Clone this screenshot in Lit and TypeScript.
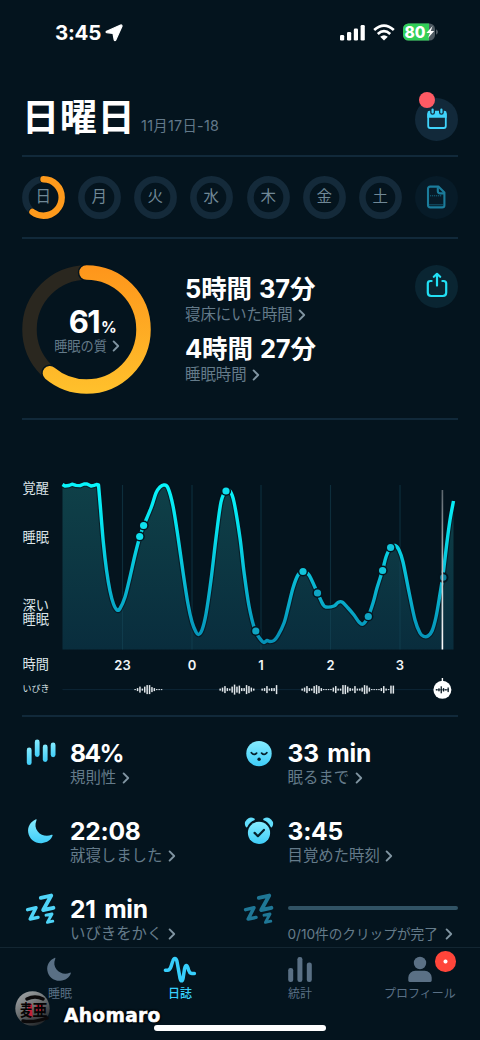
import { LitElement, html, svg, css } from 'lit';
import { customElement, property } from 'lit/decorators.js';
import { classMap } from 'lit/directives/class-map.js';

const chevron = html`<svg class="chevron" width="8" height="12" viewBox="0 0 8 12" fill="none" stroke="currentColor" stroke-width="1.9" stroke-linecap="round" stroke-linejoin="round"><path d="M1.6 1.4 6.2 6 1.6 10.6"/></svg>`;

const ICE = svg`<linearGradient id="ice" x1="0" y1="0" x2="0" y2="1"><stop offset="0" stop-color="#86ecff"/><stop offset="1" stop-color="#3fcdf8"/></linearGradient>`;

const MOON = 'M8.6 1.4C3.4 3.6 0.4 8.6 1.2 14.4 2.2 21 8 25.6 14.6 25.2 20 24.8 24.2 21.8 25.6 17.6 25.8 16.8 25.4 16.4 24.6 16.8 19.8 18.8 14 17.6 10.8 13.4 8.2 10 7.8 6.4 9.4 2.4 9.8 1.4 9.4 1 8.6 1.4Z';

const statIcons = {
  bars: svg`<svg width="30" height="28" viewBox="0 0 30 28">${ICE}
    <rect x="0.8" y="9.6" width="4.8" height="17.5" rx="2.4" fill="url(#ice)"/>
    <rect x="8.8" y="1.6" width="4.8" height="17.4" rx="2.4" fill="url(#ice)"/>
    <rect x="16.8" y="6.6" width="4.8" height="17.4" rx="2.4" fill="url(#ice)"/>
    <rect x="24.7" y="4.6" width="4.8" height="14.6" rx="2.4" fill="url(#ice)"/></svg>`,
  face: svg`<svg width="30" height="28" viewBox="0 0 30 28">${ICE}
    <circle cx="15" cy="15.6" r="12.7" fill="url(#ice)"/>
    <g fill="none" stroke="#06212d" stroke-width="1.8" stroke-linecap="round"><path d="M7.4 14.7q2.6 3.2 5.2 .4M17.6 15.1q2.6 2.8 5.2-.4"/></g>
    <circle cx="15.1" cy="21.2" r="1.7" fill="#06212d"/></svg>`,
  moon: svg`<svg width="30" height="28" viewBox="0 0 30 28">${ICE}<path transform="translate(1 2)" d="${MOON}" fill="url(#ice)"/></svg>`,
  alarm: svg`<svg width="30" height="28" viewBox="0 0 30 28">${ICE}
    <path d="M2.6 10.4A5.2 5.2 0 0 1 9.8 3.4Q5 5.4 2.6 10.4ZM27.4 10.4A5.2 5.2 0 0 0 20.2 3.4Q25 5.4 27.4 10.4Z" fill="url(#ice)" stroke="#62defc" stroke-width="1.9" stroke-linejoin="round"/>
    <circle cx="15" cy="16.4" r="12.2" fill="#04141e"/>
    <circle cx="15" cy="16.9" r="11.1" fill="url(#ice)"/>
    <path d="M10.6 16.9l3.3 3.3 6-6.3" fill="none" stroke="#06212d" stroke-width="2.2" stroke-linecap="round" stroke-linejoin="round"/></svg>`,
  zzz: svg`<svg width="30" height="32" viewBox="0 0 30 32" fill="none" stroke="currentColor" stroke-linecap="round" stroke-linejoin="round">
    <path stroke-width="3.9" d="M14.8 3.8 25.2 1.6 17.2 16 27.4 13.8"/>
    <path stroke-width="3.5" d="M1.6 15.6 10 13.8 4.2 25 12 23.4"/>
    <path stroke-width="2.9" d="M20 21.2 26 20 21.4 28.4 26.8 27.2"/></svg>`,
};

const tabIcons = {
  moon: svg`<svg width="28" height="27" viewBox="0 0 28 27"><path transform="translate(.2 .6) scale(.96)" d="${MOON}" fill="currentColor"/></svg>`,
  pulse: svg`<svg width="34" height="27" viewBox="0 0 34 27" fill="none" stroke="currentColor" stroke-width="3.5" stroke-linecap="round" stroke-linejoin="round"><path d="M2.4 14.2H4.6Q6.8 14.2 8 10.6L9.8 5C10.8 1.6 13 1.6 13.9 5L17.1 22.6C17.8 25.6 19.4 25.6 20 22.6L21.6 12.6C22.4 8.6 24 8.4 25 12 25.8 15.6 26.6 17.4 28.8 17.4H31.4"/></svg>`,
  bars: svg`<svg width="26" height="27" viewBox="0 0 26 27" fill="currentColor"><rect x="1.2" y="12" width="5" height="14" rx="2.3"/><rect x="10.4" y="1" width="5" height="25" rx="2.3"/><rect x="19.8" y="6.4" width="5" height="19.6" rx="2.3"/></svg>`,
  person: svg`<svg width="26" height="27" viewBox="0 0 26 27" fill="currentColor"><circle cx="13" cy="7" r="6.2"/><path d="M1.3 24.6V21.5A7 7 0 0 1 8.3 14.8H17.7A7 7 0 0 1 24.7 21.5V24.6Q24.7 26 23.3 26H2.7Q1.3 26 1.3 24.6Z"/></svg>`,
};

type Point = [number, number];

// x runs over the full width of the screen, y from the top of the chart section
const CURVE: Point[] = [
  [98.5, 65], [100.3, 86], [103.3, 122], [106.5, 150], [110, 171], [113.5, 184], [117, 190], [120, 188.5], [125, 177],
  [130, 157], [135, 135], [140, 116], [143.5, 106], [151, 88], [156, 73], [160, 67], [164, 65], [168, 68], [173, 86],
  [178, 117], [183, 152], [188, 184], [192, 202], [196, 212], [198.5, 214.5], [202, 210], [206, 194],
  [211, 160], [216, 118], [221, 82], [226, 71], [230, 71], [234, 82], [240, 118], [244, 152], [249, 186],
  [255, 210], [261, 220], [264, 222.5], [267, 220.5], [270, 221.5], [274, 220.5], [278, 215.5], [284, 203],
  [288, 188], [293, 168], [298, 155], [303, 151.5], [309, 155], [317.5, 173], [323, 184.5], [326, 187],
  [334, 186], [338, 182.5], [342, 182], [348, 188], [354, 195], [359, 202], [363, 204], [368, 197],
  [373, 183], [377, 168], [382.5, 150.5], [386, 137], [390.5, 127.5], [395, 125.5], [399, 130], [403, 142],
  [409, 172], [415, 200], [420, 213], [424, 216.5], [428, 216], [432, 211], [436, 197], [440, 174],
  [443, 155], [447, 122], [450, 100], [453.5, 81],
];

const DOTS: Point[] = [
  [139.7, 116.5], [143.6, 105.5], [226, 71], [255.8, 211], [303, 151.5], [317.5, 173],
  [368.3, 196.5], [382.6, 150.5], [390.6, 127.5],
];

const HOURS = [
  { x: 122.5, label: '23' },
  { x: 192, label: '0' },
  { x: 261, label: '1' },
  { x: 330.5, label: '2' },
  { x: 400, label: '3' },
];

// bar heights of the snoring track, one every 2.4px
const SNORES = [
  { x: 135, bars: [1, 3, 6, 2, 6, 9, 9, 5, 3, 1, 1, 1] },
  { x: 220, bars: [2, 4, 7, 3, 2, 6, 10, 6, 8, 3, 3, 9, 7, 4, 2] },
  { x: 262, bars: [2, 3, 7, 2, 3, 3, 9] },
  { x: 302, bars: [2, 4, 7, 3, 2, 7, 9, 7, 3, 1, 1, 1, 1, 4, 7, 2, 2, 9, 9, 6, 3, 2, 7, 2, 2, 4, 9, 8, 4, 1, 1, 1, 1, 3, 7, 2, 1, 8, 8] },
];

function smooth(points: Point[]) {
  let d = '';
  for (let i = 0; i < points.length - 1; i++) {
    const p0 = points[i - 1] || points[i];
    const p1 = points[i];
    const p2 = points[i + 1];
    const p3 = points[i + 2] || p2;
    d += `C${p1[0] + (p2[0] - p0[0]) / 6} ${p1[1] + (p2[1] - p0[1]) / 6} ${p2[0] - (p3[0] - p1[0]) / 6} ${p2[1] - (p3[1] - p1[1]) / 6} ${p2[0]} ${p2[1]}`;
  }
  return d;
}

function dotColor(y: number) {
  if (y < 120) return '#0fe0ee';
  return y < 160 ? '#12c4da' : '#0fa5c4';
}

@customElement('day-ring')
class DayRing extends LitElement {
  @property() label = '';
  @property({ type: Number }) score = 0;

  static styles = css`
    :host { display: block; width: 43px; height: 43px; }
    svg { display: block; }
    text { font: 400 15.5px "Noto Sans CJK JP", sans-serif; fill: #708896; }
  `;

  render() {
    const len = 2 * Math.PI * 18.2;
    return html`
      <svg width="43" height="43" viewBox="0 0 43 43" fill="none">
        <circle cx="21.5" cy="21.5" r="18.1" stroke="#142a3a" stroke-width="6.6"/>
        ${this.score ? svg`
          <g transform="rotate(-90 21.5 21.5)" stroke-linecap="round">
            <circle cx="21.5" cy="21.5" r="18.2" stroke="#04141e" stroke-width="8" stroke-dasharray="${len * this.score} ${len}"/>
            <circle cx="21.5" cy="21.5" r="18.2" stroke="#fe9a1c" stroke-width="6.4" stroke-dasharray="${len * this.score} ${len}"/>
          </g>` : ''}
        <text x="21.3" y="26.3" text-anchor="middle">${this.label}</text>
      </svg>
    `;
  }
}

@customElement('sleep-chart')
class SleepChart extends LitElement {
  static styles = css`
    :host { display: block; }
    svg { display: block; }
    .axis { font: 400 13.2px "Noto Sans CJK JP", sans-serif; fill: #dde5e9; }
    .small { font-size: 9px; }
    .hour { font: 600 13px Inter, sans-serif; fill: #f1f5f7; }
  `;

  render() {
    const head = 'M62.5 64.5L65 66 69 65.5 72 64.2 76 65.4 80 65.6 84 64 87 64 91 66 94 65.4 96.5 64.5 98.5 65';
    const line = head + smooth(CURVE);
    return html`
      <svg width="480" height="296" viewBox="0 0 480 296">
        <defs>
          <linearGradient id="line" gradientUnits="userSpaceOnUse" x1="0" y1="65" x2="0" y2="225">
            <stop offset="0" stop-color="#08f5fb"/><stop offset=".25" stop-color="#05e2ee"/>
            <stop offset=".6" stop-color="#08b9d3"/><stop offset="1" stop-color="#058fb5"/>
          </linearGradient>
          <linearGradient id="area" gradientUnits="userSpaceOnUse" x1="0" y1="65" x2="0" y2="229">
            <stop offset="0" stop-color="#0f4048"/><stop offset="1" stop-color="#092d3d"/>
          </linearGradient>
          <linearGradient id="cursor" gradientUnits="userSpaceOnUse" x1="0" y1="70" x2="0" y2="229">
            <stop offset="0" stop-color="#5c666d"/><stop offset=".5" stop-color="#b9bec1"/><stop offset="1" stop-color="#fff"/>
          </linearGradient>
        </defs>
        <path d="${line}V229.5H62.5Z" fill="url(#area)"/>
        ${HOURS.map(h => svg`<path d="M${h.x} 65V229.5" stroke="#15475a" stroke-opacity=".5" stroke-width="1.2"/>`)}
        <path d="${line}" fill="none" stroke="#05131d" stroke-width="5.6" stroke-linejoin="round" stroke-opacity=".7"/>
        <path d="${line}" fill="none" stroke="url(#line)" stroke-width="3.4" stroke-linejoin="round"/>
        <circle cx="443.3" cy="157.5" r="4.2" fill="#087f9c" stroke="#04141e" stroke-width="2"/>
        ${DOTS.map(([x, y]) => svg`
          <circle cx="${x}" cy="${y}" r="5.1" fill="#04141e"/>
          <circle cx="${x}" cy="${y}" r="3.6" fill="${dotColor(y)}"/>`)}
        <path d="M442.4 70V229.5" stroke="url(#cursor)" stroke-width="1.6"/>

        <text class="axis" x="22.5" y="73">覚醒</text>
        <text class="axis" x="22.5" y="122">睡眠</text>
        <text class="axis" x="22.5" y="190">深い</text>
        <text class="axis" x="22.5" y="203.5">睡眠</text>
        <text class="axis" x="22.5" y="249">時間</text>
        <text class="axis small" x="22.5" y="272">いびき</text>
        ${HOURS.map(h => svg`<text class="hour" x="${h.x}" y="249.7" text-anchor="middle">${h.label}</text>`)}

        <path d="M62.5 269.6H433" stroke="#0d2637" stroke-width="1"/>
        ${SNORES.map(s => s.bars.map((b, i) => svg`<rect x="${s.x + i * 2.4 - 0.6}" y="${269.6 - b / 2}" width="1.5" height="${b}" fill="#e2e7ea"/>`))}
        <path d="M442.4 258V262" stroke="#fff" stroke-width="1.4"/>
        <circle cx="442.4" cy="269.8" r="9" fill="#fff"/>
        ${[1.2, 3, 7, 3.4, 1.4, 4.6].map((b, i) => svg`<rect x="${436 + i * 2.3}" y="${269.8 - b / 2}" width="1.3" height="${b}" fill="#0a1a24"/>`)}
        <path d="M435.6 269.8H449" stroke="#0a1a24" stroke-width=".7"/>
      </svg>
    `;
  }
}

@customElement('app-root')
class AppRoot extends LitElement {
  static styles = css`
    :host {
      display: flex;
      flex-direction: column;
      position: relative;
      width: 480px;
      height: 1040px;
      overflow: hidden;
      background: #04141e;
      color: #fff;
      font-family: Inter, "Noto Sans CJK JP", sans-serif;
    }
    svg { display: block; flex: none; overflow: visible; }
    section, header { box-sizing: border-box; margin: 0 22px; border-bottom: 2px solid #11293a; }
    .status {
      display: flex;
      align-items: center;
      height: 66px;
      flex: none;
      padding: 0 42px 0 55px;
    }
    .clock { font-size: 20.5px; font-weight: 700; letter-spacing: -0.25px; margin: -1px 4px 0 0; }
    .spacer { flex: 1; }
    .signals { display: flex; align-items: center; gap: 8px; margin-top: -2px; }
    .battery { font: 800 15.5px Inter, sans-serif; fill: #fff; }

    header { display: flex; height: 91px; flex: none; }
    .title { margin-top: 21px; font-size: 37.2px; line-height: 62px; font-weight: 700; letter-spacing: 0.5px; }
    .date { margin: 50px 0 0 6px; font-size: 14.3px; line-height: 20px; letter-spacing: 0.3px; color: #63798a; }
    .round {
      position: relative;
      display: flex;
      align-items: center;
      justify-content: center;
      width: 43px;
      height: 43px;
      border-radius: 50%;
      flex: none;
    }
    .calendar { margin-top: 32px; background: #12293a; }
    .calendar svg { margin-top: -2px; }
    .badge { position: absolute; left: 4px; top: -6px; width: 16px; height: 16px; border-radius: 50%; background: #fe5a64; }
    .note { background: #071b28; }
    .share { margin-top: 26px; background: #0a2532; }
    .share svg { margin-top: -3px; }

    .days { display: flex; align-items: center; justify-content: space-between; height: 82px; flex: none; }

    .score { display: flex; height: 181px; flex: none; }
    .gauge { position: relative; width: 129px; height: 129px; margin-top: 26px; }
    .gauge-text { position: absolute; inset: 0; display: flex; flex-direction: column; align-items: center; padding-top: 41px; }
    .percent { font-size: 31px; font-weight: 700; line-height: 32px; height: 32.5px; letter-spacing: -1.6px; margin-left: 12px; }
    .percent small { font-size: 15.5px; line-height: 1; letter-spacing: -0.5px; margin-left: 2px; }
    .link { display: flex; align-items: center; gap: 5.5px; font-size: 15.4px; line-height: 22px; color: #647b8a; white-space: nowrap; }
    .link .chevron { color: #8095a2; }
    .gauge .link { font-size: 13.2px; gap: 5px; line-height: 14px; margin-left: 1px; }
    .durations { margin: 33px 0 0 34px; }
    .duration { font-size: 25.5px; line-height: 34px; height: 32px; font-weight: 700; letter-spacing: -0.15px; word-spacing: 1.2px; white-space: nowrap; }
    .durations .link { height: 22px; line-height: 20px; margin-bottom: 6px; padding-bottom: 1px; box-sizing: border-box; }

    .chart { height: 297px; flex: none; }
    .chart sleep-chart { margin-left: -22px; }

    .stats {
      display: grid;
      grid-template-columns: 217.5px 218.5px;
      grid-auto-rows: 78px;
      flex: none;
      height: 230px;
      margin: 0 22px;
      padding-top: 19px;
      box-sizing: border-box;
      overflow: hidden;
    }
    .stat { display: flex; gap: 14px; padding-left: 4px; }
    .stat-icon { width: 30px; height: 32px; padding-top: 2px; color: #4fd4f8; }
    .stat.pending .stat-icon { color: #1f7796; }
    .value { font-size: 24.6px; line-height: 34px; font-weight: 700; letter-spacing: -0.25px; word-spacing: 3px; }
    .percentage { letter-spacing: -1.6px; }
    .stat .link { line-height: 20px; margin-top: -2px; }
    .pending .link { font-size: 13.7px; margin-top: 14px; gap: 7px; letter-spacing: -0.05px; }
    .progress { width: 170px; height: 4.5px; margin-top: 13.5px; border-radius: 2.5px; background: #315365; }

    nav { display: grid; grid-template-columns: repeat(4, 1fr); height: 93px; flex: none; border-top: 1px solid #132632; box-sizing: border-box; }
    .tab { position: relative; display: flex; flex-direction: column; align-items: center; padding-top: 8px; color: #5a7085; font-size: 12px; line-height: 18px; }
    .tab span { margin-top: 2px; }
    .tab.active { color: #37cffc; font-weight: 500; }
    .alert { position: absolute; left: 75px; top: 3px; width: 20.5px; height: 20.5px; border-radius: 50%; background: radial-gradient(circle, #fff 1.6px, #ff453a 2.4px); }

    .home { position: absolute; left: 154px; top: 1025px; width: 172px; height: 6px; border-radius: 3px; background: #fff; }
    .signature { position: absolute; left: 14px; top: 990px; display: flex; align-items: center; }
    .name {
      margin: 14px 0 0 12px;
      font: 700 18.6px/24px "DejaVu Sans", sans-serif;
      letter-spacing: 0.35px;
      -webkit-text-stroke: 0.5px #fff;
      text-shadow: 0 0 2px #000, 1px 1px 2px #000, -1px -1px 2px #000;
    }
    .seal { font: 700 16px "Noto Sans CJK JP", sans-serif; }
  `;

  private _link(text: string) {
    return html`<div class="link"><span>${text}</span>${chevron}</div>`;
  }

  private _stat(icon: keyof typeof statIcons, value: string, label: string) {
    return html`
      <div class="stat">
        <div class="stat-icon">${statIcons[icon]}</div>
        <div>
          <div class=${classMap({ value: true, percentage: value.endsWith('%') })}>${value}</div>
          ${this._link(label)}
        </div>
      </div>
    `;
  }

  private _tab(icon: keyof typeof tabIcons, label: string, active = false, alert = false) {
    return html`
      <div class=${classMap({ tab: true, active })}>
        ${tabIcons[icon]}
        <span>${label}</span>
        ${alert ? html`<i class="alert"></i>` : ''}
      </div>
    `;
  }

  private _gauge() {
    const r = 57;
    const len = 2 * Math.PI * r;
    const dash = `${len * 0.61} ${len}`;
    return html`
      <svg width="129" height="129" viewBox="0 0 129 129" fill="none">
        <defs>
          <linearGradient id="gold" gradientUnits="userSpaceOnUse" x1="0" y1="0" x2="0" y2="129" gradientTransform="rotate(90 64.5 64.5)">
            <stop offset="0" stop-color="#fe951b"/><stop offset="1" stop-color="#ffc12c"/>
          </linearGradient>
        </defs>
        <circle cx="64.5" cy="64.5" r="${r}" stroke="#2a271f" stroke-width="14.5"/>
        <g transform="rotate(-90 64.5 64.5)" stroke-linecap="round">
          <circle cx="64.5" cy="64.5" r="${r}" stroke="#04141e" stroke-width="17.5" stroke-dasharray="${dash}"/>
          <circle cx="64.5" cy="64.5" r="${r}" stroke="url(#gold)" stroke-width="14.5" stroke-dasharray="${dash}"/>
        </g>
      </svg>
    `;
  }

  render() {
    const days = ['日', '月', '火', '水', '木', '金', '土'];

    return html`
      <div class="status">
        <span class="clock">3:45</span>
        <svg width="18" height="18" viewBox="0 0 18 18"><path d="M15.6 1 1.6 7.2Q.6 8 1.6 8.6L8 9.4 9.2 16Q10 17.2 10.8 16L17 2.2Q17.2.6 15.6 1Z" fill="#fff" stroke="#fff" stroke-width="1.2" stroke-linejoin="round"/></svg>
        <span class="spacer"></span>
        <div class="signals">
          <svg width="25" height="17" viewBox="0 0 25 17" fill="#fff"><rect x="0" y="11" width="4.2" height="5.6" rx="1.3"/><rect x="7" y="8" width="4.2" height="8.6" rx="1.3"/><rect x="13.8" y="4.6" width="4.2" height="12" rx="1.3"/><rect x="20.6" y="1" width="4.2" height="15.6" rx="1.3"/></svg>
          <svg width="22" height="17" viewBox="0 0 22 17" fill="none" stroke="#fff" stroke-width="2.7"><path d="M1.2 6.1Q11-2.8 20.8 6.1M4.8 9.9Q11 4.3 17.2 9.9"/><path d="M11 16.6 7.2 12.8Q11 9.6 14.8 12.8Z" fill="#fff" stroke="none"/></svg>
          <svg width="35" height="18" viewBox="0 0 35 18">
            <clipPath id="cell"><rect x="0" y="0.5" width="32" height="17" rx="5.5"/></clipPath>
            <g clip-path="url(#cell)"><rect width="32" height="18" fill="#4d5961"/><rect width="26" height="18" fill="#31cf58"/></g>
            <path d="M33 6.2Q35 7.2 35 9T33 11.8Z" fill="#4d5961"/>
            <text class="battery" x="1.4" y="14.6" textLength="21" lengthAdjust="spacingAndGlyphs">80</text>
            <path d="M29.6 3 23.4 10H26.8L25 15 31.2 8H27.8Z" fill="#fff"/>
          </svg>
        </div>
      </div>

      <header>
        <div class="title">日曜日</div>
        <div class="date">11月17日-18</div>
        <span class="spacer"></span>
        <div class="round calendar">
          <svg width="22" height="22" viewBox="0 0 22 22">
            <path d="M2.2 6V18Q2.2 20 4.2 20H17.8Q19.8 20 19.8 18V6" fill="none" stroke="#3fd3fb" stroke-width="1.8"/>
            <path d="M1.3 9.8V5.2Q1.3 2.8 3.7 2.8H18.3Q20.7 2.8 20.7 5.2V9.8Z" fill="#3fd3fb"/>
            <path d="M6.6 1.4V4.4M15.4 1.4V4.4" stroke="#12293a" stroke-width="4.8" stroke-linecap="round"/>
            <path d="M6.6 1.6V4.4M15.4 1.6V4.4" stroke="#3fd3fb" stroke-width="2.2" stroke-linecap="round"/>
          </svg>
          <i class="badge"></i>
        </div>
      </header>

      <section class="days">
        ${days.map((day, i) => html`<day-ring label=${day} score=${i === 0 ? 0.6 : 0}></day-ring>`)}
        <div class="round note">
          <svg width="20" height="24" viewBox="0 0 20 24" fill="none" stroke="#1b7c9b" stroke-width="2.1" stroke-linejoin="round">
            <path d="M4.2 1.6H12.4L18.4 7.6V20.2Q18.4 22.4 16.2 22.4H4.2Q2 22.4 2 20.2V3.8Q2 1.6 4.2 1.6Z"/>
            <path d="M11.8 2.2V6Q11.8 8.4 14.2 8.4H18"/>
            <path d="M4 10.8H16" stroke-width=".8" stroke-dasharray="1.2 .8"/><path d="M3 19.8H17.4" stroke-width="1" stroke-opacity=".6"/>
          </svg>
        </div>
      </section>

      <section class="score">
        <div class="gauge">
          ${this._gauge()}
          <div class="gauge-text">
            <div class="percent">61<small>%</small></div>
            ${this._link('睡眠の質')}
          </div>
        </div>
        <div class="durations">
          <div class="duration">5時間 37分</div>
          ${this._link('寝床にいた時間')}
          <div class="duration">4時間 27分</div>
          ${this._link('睡眠時間')}
        </div>
        <span class="spacer"></span>
        <div class="round share">
          <svg width="22" height="26" viewBox="0 0 22 26" fill="none" stroke="#22e0f5" stroke-width="2.2" stroke-linecap="round" stroke-linejoin="round">
            <path d="M5.6 9H4.4Q1.8 9 1.8 11.6V20.6Q1.8 24 5.2 24H16.8Q20.2 24 20.2 20.6V11.6Q20.2 9 17.6 9H16.4M11 13.6V2.4M7.8 4.8 11 1.8 14.2 4.8"/>
          </svg>
        </div>
      </section>

      <section class="chart"><sleep-chart></sleep-chart></section>

      <div class="stats">
        ${this._stat('bars', '84%', '規則性')}
        ${this._stat('face', '33 min', '眠るまで')}
        ${this._stat('moon', '22:08', '就寝しました')}
        ${this._stat('alarm', '3:45', '目覚めた時刻')}
        ${this._stat('zzz', '21 min', 'いびきをかく')}
        <div class="stat pending">
          <div class="stat-icon">${statIcons.zzz}</div>
          <div>
            <div class="progress"></div>
            ${this._link('0/10件のクリップが完了')}
          </div>
        </div>
      </div>

      <nav>
        ${this._tab('moon', '睡眠')}
        ${this._tab('pulse', '日誌', true)}
        ${this._tab('bars', '統計')}
        ${this._tab('person', 'プロフィール', false, true)}
      </nav>

      <div class="signature">
        <svg width="38" height="38" viewBox="0 0 38 38">
          <defs><linearGradient id="rim" x1=".1" y1="0" x2=".7" y2="1"><stop offset="0" stop-color="#a5a9ab"/><stop offset=".5" stop-color="#6b6f71"/><stop offset="1" stop-color="#202326"/></linearGradient></defs>
          <circle cx="18.5" cy="18.5" r="17.2" fill="url(#rim)"/>
          <path d="M13 9Q21 5 29 9M9 31Q20 33 33 28" fill="none" stroke="#0b090a" stroke-width="3.4" stroke-linecap="round"/>
          <path d="M14 13 18 14 18.6 27 15 28 14 22ZM22 15H29V22H22Z" fill="#c41f36"/>
          <g class="seal" fill="#060405">
            <text x="6" y="26.4" textLength="12" lengthAdjust="spacingAndGlyphs">麦</text>
            <text x="18.4" y="26" textLength="15" lengthAdjust="spacingAndGlyphs">亜</text>
          </g>
        </svg>
        <span class="name">Ahomaro</span>
      </div>
      <i class="home"></i>
    `;
  }
}
